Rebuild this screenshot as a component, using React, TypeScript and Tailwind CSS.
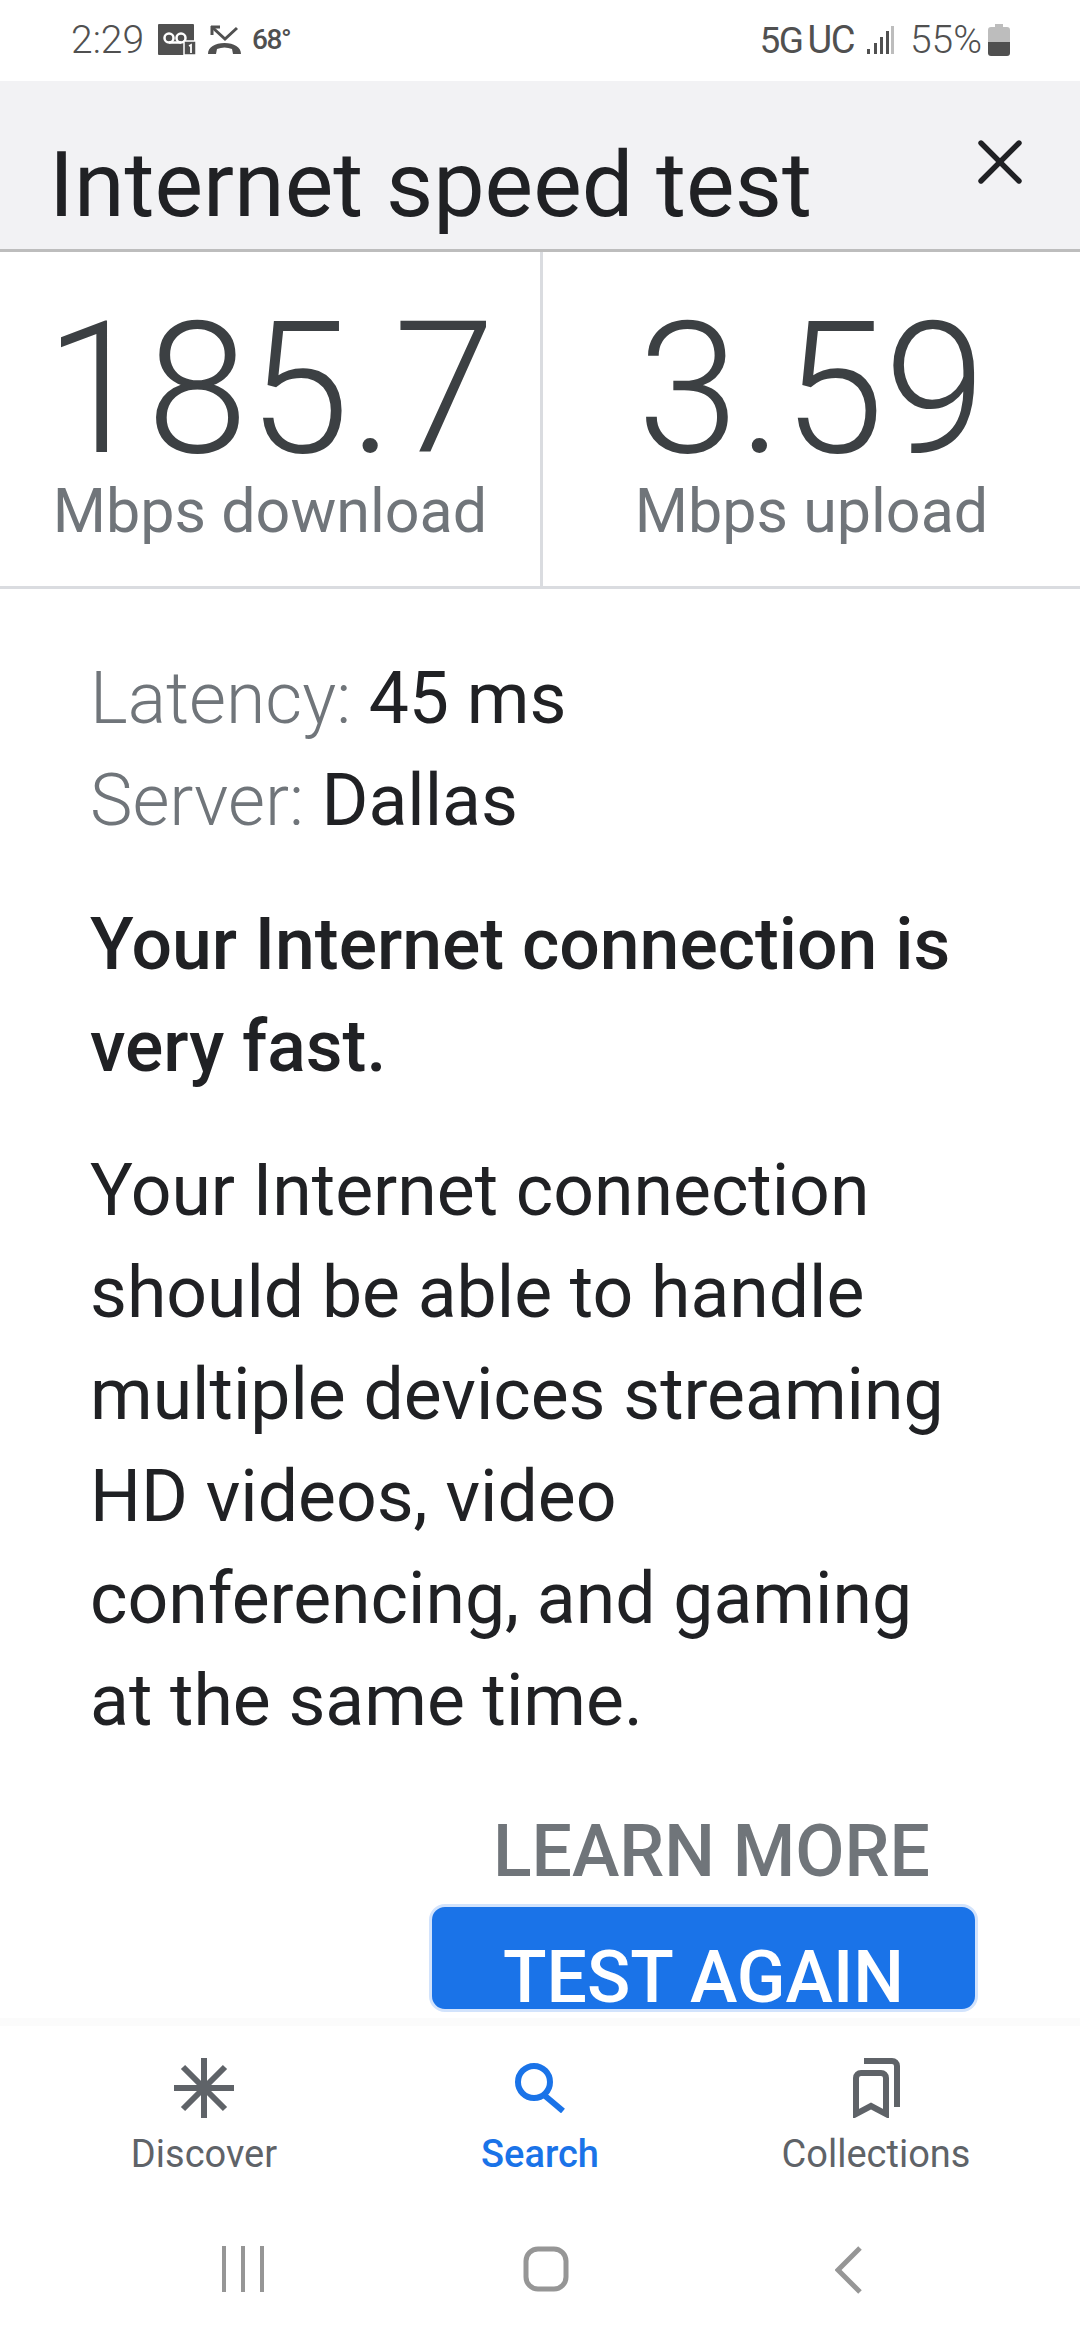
import type { ReactNode } from 'react';
import { X } from 'lucide-react';

function VoicemailIcon() {
  return (
    <svg width="39" height="32" viewBox="0 0 39 32">
      <rect x="0" y="0" width="36" height="31" rx="1" fill="#505050" />
      <circle cx="11" cy="14" r="4.500" fill="none" stroke="#fff" strokeWidth="2.500" />
      <circle cx="23" cy="14" r="4.500" fill="none" stroke="#fff" strokeWidth="2.500" />
      <path d="M11 18.500h12" stroke="#fff" strokeWidth="2.500" />
      <rect x="26" y="17" width="12" height="14" fill="#505050" stroke="#fff" strokeWidth="1.500" />
      <path d="M31 22l2-1v8" fill="none" stroke="#fff" strokeWidth="1.800" />
    </svg>
  );
}

function MissedCallIcon() {
  return (
    <svg width="33" height="30" viewBox="0 0 33 30" fill="none">
      <path d="M5 3l12 11L29 3" stroke="#505050" strokeWidth="3" />
      <path d="M4 1v9M3 2h9" stroke="#505050" strokeWidth="3" />
      <path d="M0 29c0-7 7-11 16.500-11S33 22 33 29h-8l-1-5c-5-2-10-2-15 0l-1 5z" fill="#505050" />
    </svg>
  );
}

function SignalIcon() {
  return (
    <svg width="27" height="30" viewBox="0 0 27 30">
      <rect x="0" y="24" width="3" height="5" fill="#505050" />
      <rect x="7" y="18" width="3" height="11" fill="#505050" />
      <rect x="13" y="12" width="3" height="17" fill="#505050" />
      <rect x="19" y="6" width="3" height="23" fill="#505050" />
      <rect x="24" y="1" width="3" height="28" fill="#bdbdbd" />
    </svg>
  );
}

function BatteryIcon() {
  return (
    <svg width="22" height="32" viewBox="0 0 22 32">
      <path d="M7 0h8v3h4a3 3 0 0 1 3 3v12H0V6a3 3 0 0 1 3-3h4z" fill="#bdbdbd" />
      <path d="M0 18h22v11a3 3 0 0 1-3 3H3a3 3 0 0 1-3-3z" fill="#505050" />
    </svg>
  );
}

function StatusBar() {
  return (
    <div className="flex h-[81px] items-center justify-between bg-white pb-[1px] pl-[71px] pr-[70px] text-[#505050]">
      <div className="flex items-center">
        <span className="text-[39px] leading-none font-light">2:29</span>
        <span className="ml-[14px] flex"><VoicemailIcon /></span>
        <span className="ml-[11px] flex"><MissedCallIcon /></span>
        <span className="ml-[11px] text-[28px] leading-none font-medium tracking-[-1.500px]">68°</span>
      </div>
      <div className="flex items-center">
        <span className="text-[37px] leading-none tracking-[-1.500px]">5G</span>
        <span className="ml-[5px] text-[38px] leading-none tracking-[-1.500px]">UC</span>
        <span className="ml-[13px] flex"><SignalIcon /></span>
        <span className="ml-[16px] text-[39px] leading-none font-light">55%</span>
        <span className="ml-[6px] flex"><BatteryIcon /></span>
      </div>
    </div>
  );
}

function Metric({ value, label, className }: { value: string; label: string; className: string }) {
  return (
    <div className={`flex flex-col items-center ${className}`}>
      <div className="mt-[58px] text-[183px] leading-[160px] font-light text-[#3c4043]">{value}</div>
      <div className="mt-[10px] text-[61px] leading-[62px] text-[#70757a]">{label}</div>
    </div>
  );
}

function NavItem({ icon, label, active }: { icon: ReactNode; label: string; active?: boolean }) {
  return (
    <div className="flex w-[336px] flex-col items-center">
      <div className="flex h-[60px] items-center justify-center">{icon}</div>
      <span className={`mt-[14px] text-[38px] leading-[44px] ${active ? 'font-medium text-[#1a73e8]' : 'text-[#5f6368]'}`}>
        {label}
      </span>
    </div>
  );
}

export default function App() {
  return (
    <div className="flex h-[2340px] w-[1080px] flex-col overflow-hidden bg-white font-['Roboto','Liberation_Sans',sans-serif]">
      <StatusBar />

      <div className="flex h-[171px] items-start justify-between border-b-[3px] border-[#bdbdbd] bg-[#f2f2f4] pl-[49px] pr-[42px]">
        <h1 className="mt-[57px] text-[91.600px] leading-[93px] text-[#202124]">Internet speed test</h1>
        <X className="mt-[43px] h-[76px] w-[76px] text-[#202124]" strokeWidth={1.7} />
      </div>

      <div className="flex h-[337px] border-b-[3px] border-[#dadce0]">
        <Metric value="185.7" label="Mbps download" className="w-[543px] border-r-[3px] border-[#dadce0]" />
        <Metric value="3.59" label="Mbps upload" className="flex-1" />
      </div>

      <div className="flex-1 overflow-hidden pl-[90px] pr-[125px]">
        <div className="mt-[59px] text-[71.500px] leading-[102px] text-[#202124]">
          <div><span className="font-light text-[#70757a]">Latency: </span>45 ms</div>
          <div><span className="font-light text-[#70757a]">Server: </span>Dallas</div>
        </div>
        <p className="mt-[42px] text-[71.500px] leading-[102px] font-medium text-[#202124]">
          Your Internet connection is very fast.
        </p>
        <p className="mt-[42px] text-[71.500px] leading-[102px] text-[#202124]">
          Your Internet connection should be able to handle multiple devices streaming HD videos, video conferencing, and gaming at the same time.
        </p>
      </div>

      <div className="flex h-[211px] flex-col items-end pr-[102px]">
        <div className="mr-[48px] text-[71.500px] leading-[90px] font-medium text-[#70757a]">LEARN MORE</div>
        <div className="mt-[7px] flex h-[108px] w-[549px] items-start justify-center rounded-[16px] border-[3px] border-[#d2e3fc] bg-[#1a73e8] pt-[41px] text-[71.500px] leading-[60px] font-medium text-white">
          TEST AGAIN
        </div>
      </div>

      <div className="h-[212px] border-t-[8px] border-[#fbfbfb] pt-[32px]">
        <div className="flex justify-center">
          <NavItem
            label="Discover"
            icon={
              <svg width="60" height="60" viewBox="0 0 60 60" stroke="#5f6368" strokeWidth="6">
                <path d="M30 0v60M0 30h60M9 9l42 42M51 9L9 51" />
              </svg>
            }
          />
          <NavItem
            label="Search"
            active
            icon={
              <svg width="52" height="50" viewBox="0 0 52 50" fill="none" stroke="#1a73e8" strokeWidth="6">
                <circle cx="20" cy="19" r="16" />
                <path d="M30 32l19 16" />
              </svg>
            }
          />
          <NavItem
            label="Collections"
            icon={
              <svg width="47" height="60" viewBox="0 0 47 60" fill="none" stroke="#5f6368" strokeWidth="6">
                <path d="M3 56V20a5 5 0 0 1 5-5h20a5 5 0 0 1 5 5v36L18 48z" />
                <path d="M11 3h28a5 5 0 0 1 5 5v41" />
              </svg>
            }
          />
        </div>
      </div>

      <div className="flex h-[110px] items-start pl-[222px] pt-[16px]">
        <svg width="42" height="46" viewBox="0 0 42 46" stroke="#969696" strokeWidth="4"><path d="M2 0v46M21 0v46M40 0v46" /></svg>
        <div className="ml-[259px] flex">
          <svg width="46" height="46" viewBox="0 0 46 46" fill="none" stroke="#969696" strokeWidth="5"><rect x="3" y="3" width="40" height="40" rx="12" /></svg>
        </div>
        <div className="ml-[266px] flex">
          <svg width="27" height="48" viewBox="0 0 27 48" fill="none" stroke="#969696" strokeWidth="5"><path d="M25 2L3 24l22 22" /></svg>
        </div>
      </div>
    </div>
  );
}
